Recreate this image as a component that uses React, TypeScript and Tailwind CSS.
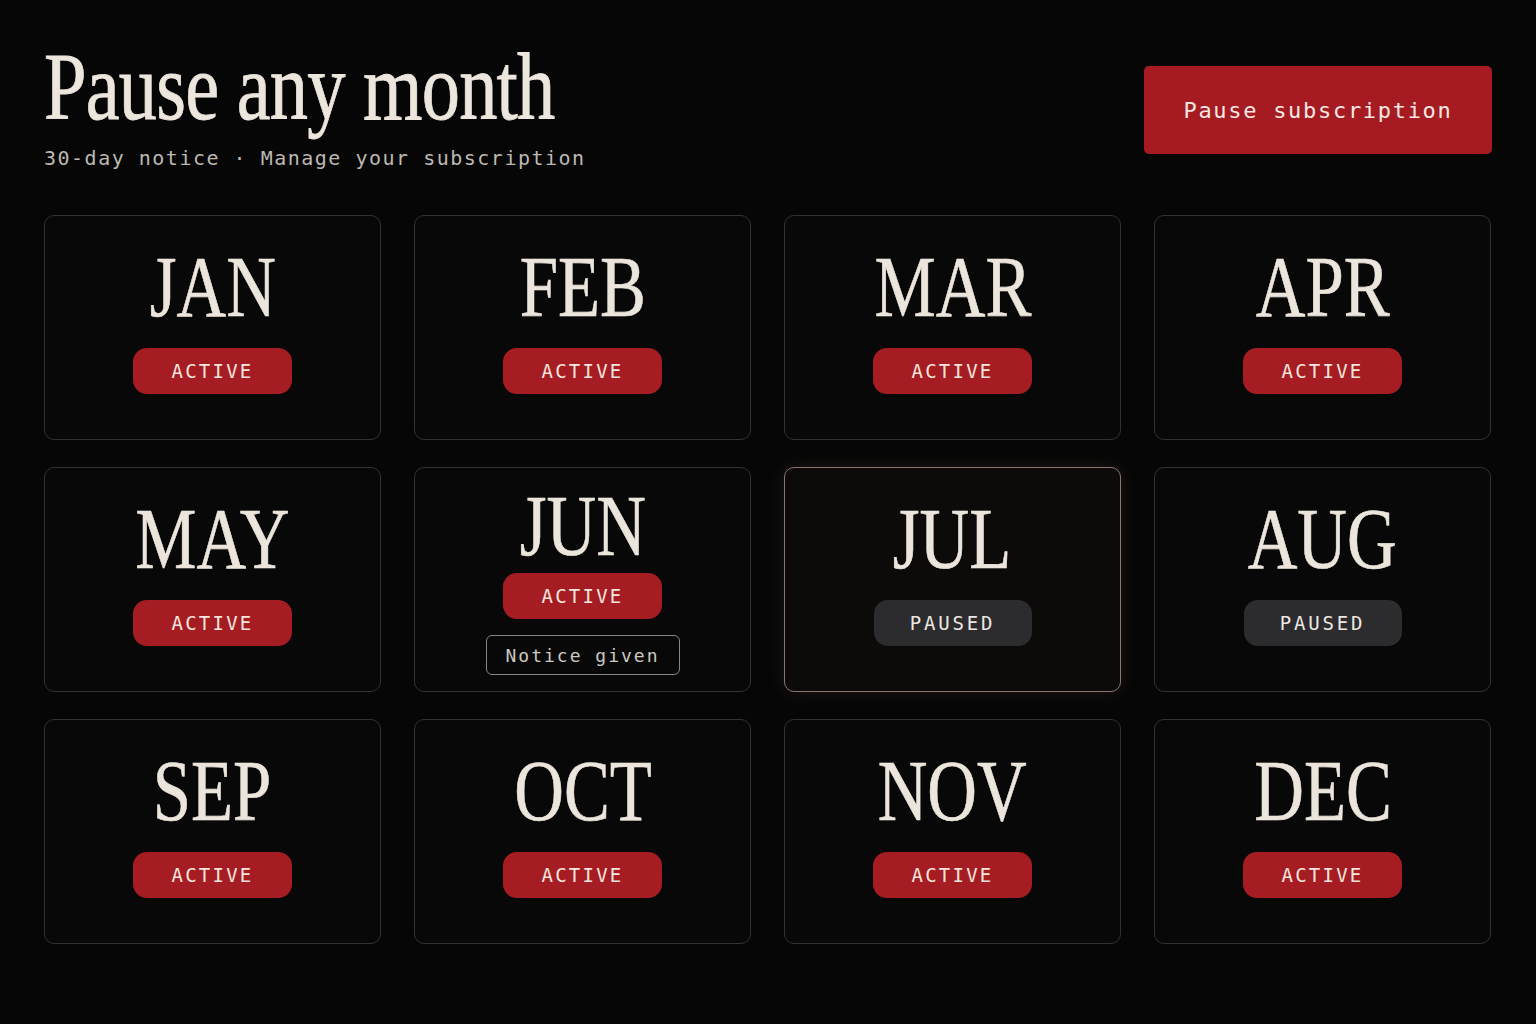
import React from 'react';

type Month = {
  name: string;
  status: 'active' | 'paused';
  notice?: boolean;
  selected?: boolean;
};

const months: Month[] = [
  { name: 'JAN', status: 'active' },
  { name: 'FEB', status: 'active' },
  { name: 'MAR', status: 'active' },
  { name: 'APR', status: 'active' },
  { name: 'MAY', status: 'active' },
  { name: 'JUN', status: 'active', notice: true },
  { name: 'JUL', status: 'paused', selected: true },
  { name: 'AUG', status: 'paused' },
  { name: 'SEP', status: 'active' },
  { name: 'OCT', status: 'active' },
  { name: 'NOV', status: 'active' },
  { name: 'DEC', status: 'active' },
];

const serif = "font-['Liberation_Serif',_'DejaVu_Serif',_serif]";
const mono = "font-['DejaVu_Sans_Mono',_'Liberation_Mono',_monospace]";

function MonthCard({ month }: { month: Month }) {
  const frame = month.selected
    ? 'border-[#8c766b] bg-[#0d0a0a] shadow-[0_0_18px_rgba(140,110,95,0.18)]'
    : 'border-[#323232] bg-[#080808]';

  return (
    <div
      className={`flex h-[225px] flex-col items-center rounded-[10px] border ${frame} ${
        month.notice ? 'pt-[15px]' : 'pt-[28px]'
      }`}
    >
      <div
        className={`${serif} origin-center scale-x-[0.8] text-[86px] leading-[1] text-[#ebe5dc] [-webkit-text-stroke:0.6px_#ebe5dc]`}
      >
        {month.name}
      </div>
      {month.status === 'active' ? (
        <div
          className={`${mono} ${month.notice ? 'mt-[4px]' : 'mt-[18px]'} flex h-[46px] w-[159px] items-center justify-center rounded-[14px] bg-[#a61c23] text-[19px] tracking-[2.2px] text-[#f4e5df]`}
        >
          ACTIVE
        </div>
      ) : (
        <div
          className={`${mono} mt-[18px] flex h-[46px] w-[158px] items-center justify-center rounded-[14px] bg-[#2c2c2f] text-[19px] tracking-[2.8px] text-[#ece7e1]`}
        >
          PAUSED
        </div>
      )}
      {month.notice && (
        <div
          className={`${mono} mt-[16px] flex h-[40px] w-[194px] items-center justify-center rounded-[6px] border border-[#8a8783] text-[18px] tracking-[2px] text-[#cdc8c2]`}
        >
          Notice given
        </div>
      )}
    </div>
  );
}

export default function App() {
  return (
    <div className="min-h-[1024px] w-full bg-[#060606] px-[44px] pt-[40px]">
      <header className="flex items-start justify-between">
        <div>
          <h1
            className={`${serif} origin-left scale-x-[0.805] whitespace-nowrap text-[95px] leading-[1] tracking-[-1px] text-[#ece6dd] [-webkit-text-stroke:0.8px_#ece6dd]`}
          >
            Pause any month
          </h1>
          <p className={`${mono} mt-[9px] text-[20px] leading-[28px] tracking-[1.5px] text-[#bdb8b2]`}>
            30-day notice · Manage your subscription
          </p>
        </div>
        <button
          className={`${mono} mt-[26px] h-[88px] w-[348px] rounded-[5px] bg-[#a61b22] text-[22px] tracking-[1.7px] text-[#f5e8e2]`}
        >
          Pause subscription
        </button>
      </header>

      <div className="mt-[43px] grid grid-cols-4 gap-x-[33px] gap-y-[27px] pr-[1px]">
        {months.map((m) => (
          <MonthCard key={m.name} month={m} />
        ))}
      </div>
    </div>
  );
}
